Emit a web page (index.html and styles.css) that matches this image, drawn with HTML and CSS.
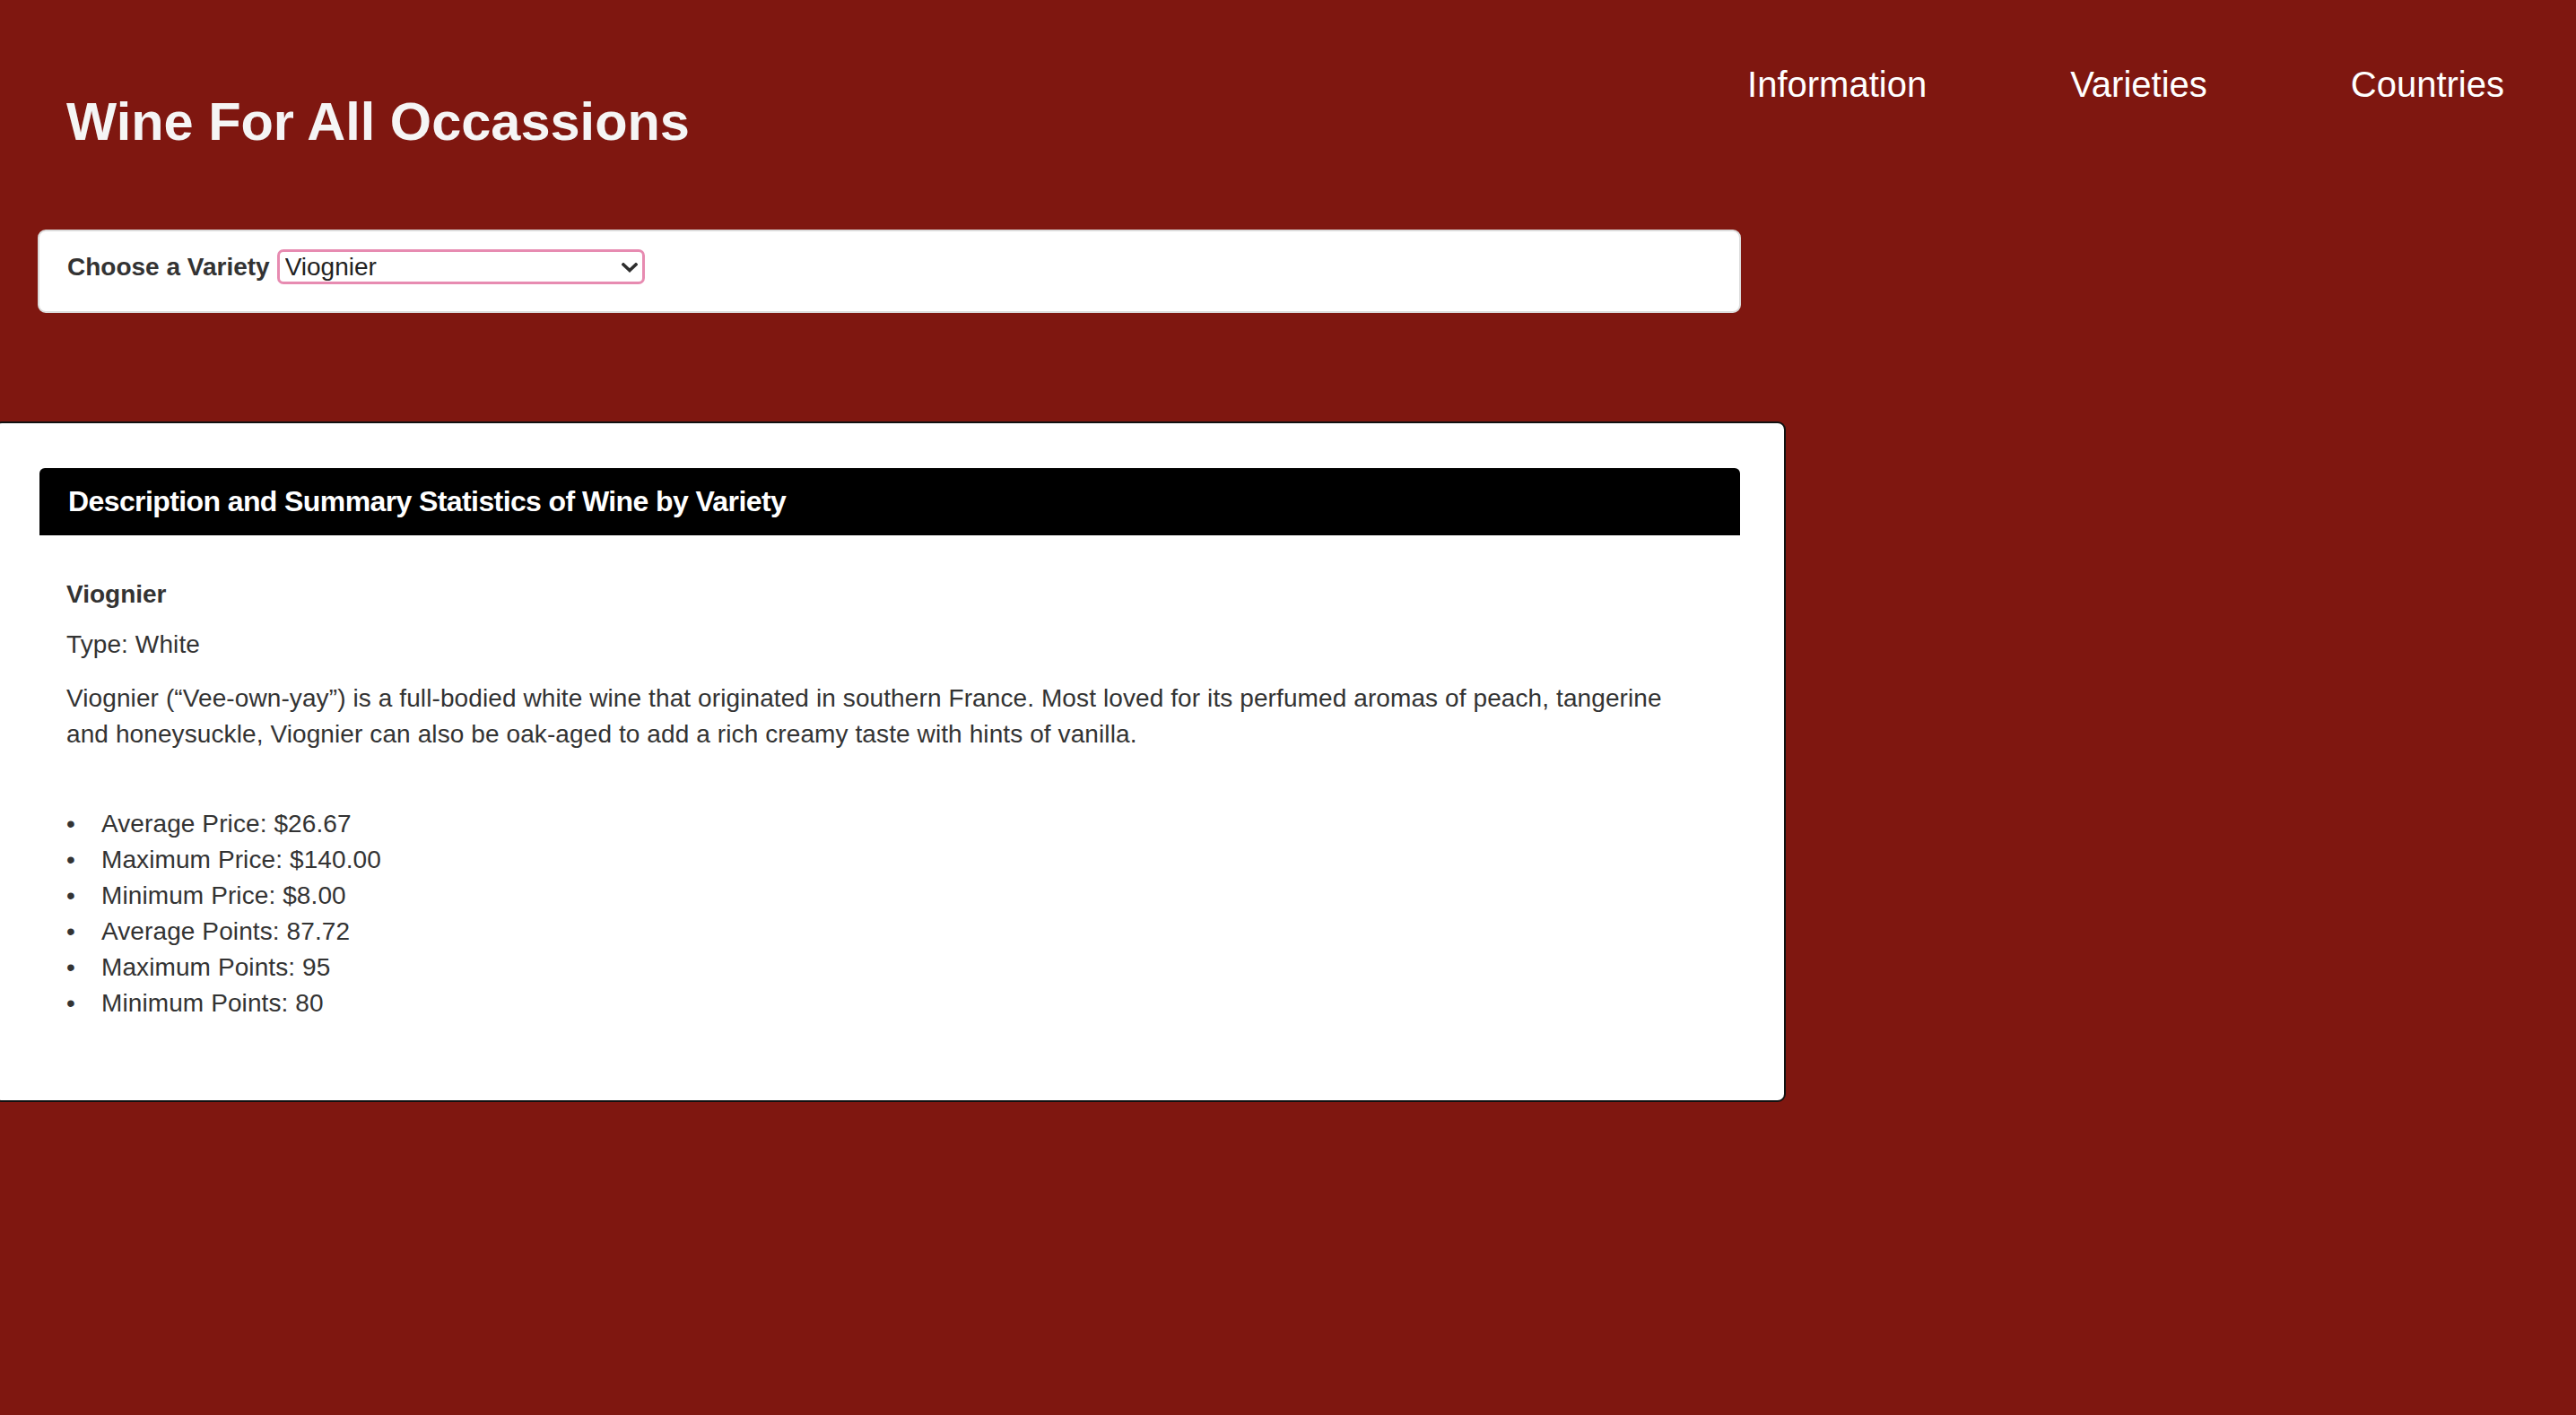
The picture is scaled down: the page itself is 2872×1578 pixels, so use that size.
FILE: index.html
```html
<!DOCTYPE html>
<html lang="en">
<head>
<meta charset="utf-8">
<title>Wine For All Occassions</title>
<link rel="stylesheet" href="styles.css">
</head>
<body>
<header class="site-header">
  <h1 class="site-title">Wine For All Occassions</h1>
  <nav class="site-nav">
    <a class="nav-link" href="#">Information</a>
    <a class="nav-link" href="#">Varieties</a>
    <a class="nav-link" href="#">Countries</a>
  </nav>
</header>
<main class="page-main">
  <section class="picker-card">
    <label class="picker-label" for="variety">Choose a Variety</label>
    <div class="select-wrap">
      <select id="variety" class="variety-select">
        <option>Viognier</option>
        <option>Chardonnay</option>
        <option>Pinot Noir</option>
        <option>Cabernet Sauvignon</option>
      </select>
      <svg class="chevron" viewBox="0 0 18 11" width="18" height="11" aria-hidden="true">
        <path d="M2 2 L9 8.5 L16 2" fill="none" stroke="#2e2e2e" stroke-width="3.6" stroke-linecap="square" stroke-linejoin="miter"/>
      </svg>
    </div>
  </section>
  <section class="stats-panel">
    <div class="inner-panel">
      <div class="panel-heading">
        <h3 class="panel-title">Description and Summary Statistics of Wine by Variety</h3>
      </div>
      <div class="panel-body">
        <h5 class="wine-name">Viognier</h5>
        <p class="wine-text">Type: White</p>
        <p class="wine-text wine-desc">Viognier (“Vee-own-yay”) is a full-bodied white wine that originated in southern France. Most loved for its perfumed aromas of peach, tangerine and honeysuckle, Viognier can also be oak-aged to add a rich creamy taste with hints of vanilla.</p>
        <ul class="stats-list">
          <li class="stat-item">Average Price: $26.67</li>
          <li class="stat-item">Maximum Price: $140.00</li>
          <li class="stat-item">Minimum Price: $8.00</li>
          <li class="stat-item">Average Points: 87.72</li>
          <li class="stat-item">Maximum Points: 95</li>
          <li class="stat-item">Minimum Points: 80</li>
        </ul>
      </div>
    </div>
  </section>
</main>
</body>
</html>
```
FILE: styles.css
```css
html, body {
  margin: 0;
  padding: 0;
}
body {
  background: #7f1710;
  font-family: "Liberation Sans", Arial, Helvetica, sans-serif;
  font-size: 28px;
  line-height: 40px;
  color: #333333;
  min-height: 1578px;
  overflow: hidden;
}

.site-header {
  display: flex;
  justify-content: space-between;
  align-items: flex-start;
}
.site-title {
  margin: 103px 0 0 74px;
  font-size: 59.5px;
  line-height: 66px;
  font-weight: 700;
  color: #f5f5f5;
}
.site-nav {
  display: flex;
  margin-top: 66px;
}
.nav-link {
  display: block;
  padding: 0 80px;
  font-size: 40px;
  line-height: 57px;
  color: #ffffff;
  text-decoration: none;
}

.page-main {
  display: block;
}

.picker-card {
  box-sizing: border-box;
  margin: 87px 0 0 42px;
  width: 1899px;
  height: 93px;
  padding: 20px 31px 30px 31px;
  background: #ffffff;
  border: 2px solid #dcdcdc;
  border-radius: 9px;
  display: flex;
  align-items: center;
}
.picker-label {
  font-weight: 700;
  font-size: 28px;
  line-height: 40px;
  color: #333333;
  margin-right: 8px;
}
.select-wrap {
  position: relative;
  width: 410px;
  height: 39px;
}
.variety-select {
  -webkit-appearance: none;
  appearance: none;
  box-sizing: border-box;
  width: 410px;
  height: 39px;
  margin: 0;
  padding: 0 40px 0 6px;
  border: 3px solid #e78bb1;
  border-radius: 7px;
  background: #ffffff;
  font-family: "Liberation Sans", Arial, Helvetica, sans-serif;
  font-size: 28px;
  line-height: 33px;
  color: #222222;
  outline: none;
}
.chevron {
  position: absolute;
  left: 384px;
  top: 15px;
  pointer-events: none;
}

.stats-panel {
  box-sizing: border-box;
  margin: 121px 0 0 -7px;
  width: 1998px;
  padding: 50px 49px 49px 49px;
  background: #ffffff;
  border: 2px solid #111111;
  border-radius: 9px;
}
.inner-panel {
  background: #ffffff;
}
.panel-heading {
  background: #000000;
  border-radius: 6px 6px 0 0;
  padding: 20px 32px;
}
.panel-title {
  margin: 0;
  font-size: 32px;
  line-height: 35.2px;
  font-weight: 700;
  letter-spacing: -0.6px;
  color: #ffffff;
}
.panel-body {
  padding: 31px 30px 30px 30px;
}
.wine-name {
  margin: 20px 0 20px 0;
  font-size: 28px;
  line-height: 30.8px;
  font-weight: 700;
  color: #333333;
}
.wine-text {
  margin: 0 0 20px 0;
  letter-spacing: 0.1px;
}
.wine-desc {
  max-width: 1805px;
}
.stats-list {
  margin: 60px 0 9px 0;
  padding: 0;
  list-style: none;
}
.stat-item {
  display: flex;
  line-height: 40px;
  letter-spacing: 0.1px;
}
.stat-item::before {
  content: "•";
  display: block;
  flex: 0 0 39px;
  color: #333333;
}
```
